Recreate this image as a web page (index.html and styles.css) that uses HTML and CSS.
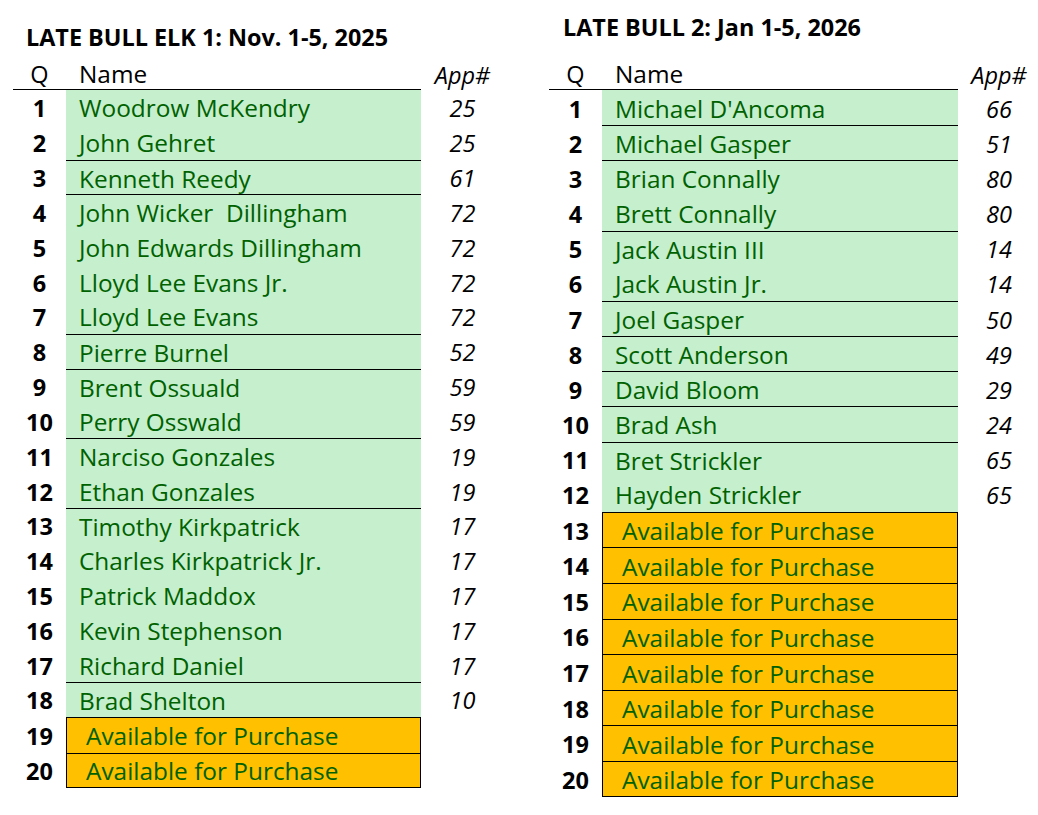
FILE: index.html
```html
<!DOCTYPE html>
<html>
<head>
<meta charset="utf-8">
<link rel="stylesheet" href="styles.css">
</head>
<body>
<div class="sheet">
  <div class="table table-left">
    <div class="title title-left">LATE BULL ELK 1: Nov. 1-5, 2025</div>
    <div class="row head">
      <div class="q">Q</div><div class="name">Name</div><div class="app">App#</div>
    </div>
    <div class="row gl"><div class="q">1</div><div class="name">Woodrow McKendry</div><div class="app">25</div></div>
    <div class="row gl"><div class="q">2</div><div class="name">John Gehret</div><div class="app">25</div></div>
    <div class="row gl"><div class="q">3</div><div class="name top">Kenneth Reedy</div><div class="app">61</div></div>
    <div class="row gl"><div class="q">4</div><div class="name top">John Wicker&nbsp; Dillingham</div><div class="app">72</div></div>
    <div class="row gl"><div class="q">5</div><div class="name">John Edwards Dillingham</div><div class="app">72</div></div>
    <div class="row gl"><div class="q">6</div><div class="name">Lloyd Lee Evans Jr.</div><div class="app">72</div></div>
    <div class="row gl"><div class="q">7</div><div class="name">Lloyd Lee Evans</div><div class="app">72</div></div>
    <div class="row gl"><div class="q">8</div><div class="name top">Pierre Burnel</div><div class="app">52</div></div>
    <div class="row gl"><div class="q">9</div><div class="name top">Brent Ossuald</div><div class="app">59</div></div>
    <div class="row gl"><div class="q">10</div><div class="name">Perry Osswald</div><div class="app">59</div></div>
    <div class="row gl"><div class="q">11</div><div class="name top">Narciso Gonzales</div><div class="app">19</div></div>
    <div class="row gl"><div class="q">12</div><div class="name">Ethan Gonzales</div><div class="app">19</div></div>
    <div class="row gl"><div class="q">13</div><div class="name top">Timothy Kirkpatrick</div><div class="app">17</div></div>
    <div class="row gl"><div class="q">14</div><div class="name">Charles Kirkpatrick Jr.</div><div class="app">17</div></div>
    <div class="row gl"><div class="q">15</div><div class="name">Patrick Maddox</div><div class="app">17</div></div>
    <div class="row gl"><div class="q">16</div><div class="name">Kevin Stephenson</div><div class="app">17</div></div>
    <div class="row gl"><div class="q">17</div><div class="name">Richard Daniel</div><div class="app">17</div></div>
    <div class="row gl"><div class="q">18</div><div class="name top">Brad Shelton</div><div class="app">10</div></div>
    <div class="row ob"><div class="q">19</div><div class="name avail">Available for Purchase</div><div class="app"></div></div>
    <div class="row ob"><div class="q">20</div><div class="name avail last">Available for Purchase</div><div class="app"></div></div>
  </div>

  <div class="table table-right">
    <div class="title">LATE BULL 2: Jan 1-5, 2026</div>
    <div class="row head">
      <div class="q">Q</div><div class="name">Name</div><div class="app">App#</div>
    </div>
    <div class="row gr"><div class="q">1</div><div class="name">Michael D'Ancoma</div><div class="app">66</div></div>
    <div class="row gr"><div class="q">2</div><div class="name top">Michael Gasper</div><div class="app">51</div></div>
    <div class="row gr"><div class="q">3</div><div class="name top">Brian Connally</div><div class="app">80</div></div>
    <div class="row gr"><div class="q">4</div><div class="name">Brett Connally</div><div class="app">80</div></div>
    <div class="row gr"><div class="q">5</div><div class="name top">Jack Austin III</div><div class="app">14</div></div>
    <div class="row gr"><div class="q">6</div><div class="name">Jack Austin Jr.</div><div class="app">14</div></div>
    <div class="row gr"><div class="q">7</div><div class="name top">Joel Gasper</div><div class="app">50</div></div>
    <div class="row gr"><div class="q">8</div><div class="name top">Scott Anderson</div><div class="app">49</div></div>
    <div class="row gr"><div class="q">9</div><div class="name top">David Bloom</div><div class="app">29</div></div>
    <div class="row gr"><div class="q">10</div><div class="name top">Brad Ash</div><div class="app">24</div></div>
    <div class="row gr"><div class="q">11</div><div class="name top">Bret Strickler</div><div class="app">65</div></div>
    <div class="row gr"><div class="q">12</div><div class="name">Hayden Strickler</div><div class="app">65</div></div>
    <div class="row ob"><div class="q">13</div><div class="name avail">Available for Purchase</div><div class="app"></div></div>
    <div class="row ob"><div class="q">14</div><div class="name avail">Available for Purchase</div><div class="app"></div></div>
    <div class="row ob"><div class="q">15</div><div class="name avail">Available for Purchase</div><div class="app"></div></div>
    <div class="row ob"><div class="q">16</div><div class="name avail">Available for Purchase</div><div class="app"></div></div>
    <div class="row ob"><div class="q">17</div><div class="name avail">Available for Purchase</div><div class="app"></div></div>
    <div class="row ob"><div class="q">18</div><div class="name avail">Available for Purchase</div><div class="app"></div></div>
    <div class="row ob"><div class="q">19</div><div class="name avail">Available for Purchase</div><div class="app"></div></div>
    <div class="row ob"><div class="q">20</div><div class="name avail last">Available for Purchase</div><div class="app"></div></div>
  </div>
</div>
</body>
</html>
```

FILE: styles.css
```css
* { box-sizing: border-box; }

html, body {
  margin: 0;
  padding: 0;
  background: #ffffff;
}

body {
  font-family: "Open Sans", "Liberation Sans", sans-serif;
  color: #000000;
  font-size: 23.5px;
}

.sheet {
  display: flex;
  align-items: flex-start;
  padding-left: 13px;
  gap: 45px;
}

.table {
  display: flex;
  flex-direction: column;
}

.table-left { width: 491px; }
.table-right { width: 491px; }

.title {
  height: 57px;
  padding-top: 15px;
  padding-left: 14px;
  font-weight: bold;
  font-size: 23.4px;
  line-height: 24px;
  white-space: nowrap;
}

.title-left {
  padding-top: 25px;
  padding-left: 13px;
}

.row {
  display: grid;
  grid-template-columns: 53px 355px 83px;
  grid-template-rows: 100%;
}

.table-right .row {
  grid-template-columns: 53px 356px 82px;
}

.row > div {
  display: flex;
  align-items: center;
  white-space: nowrap;
  line-height: 28px;
  padding-top: 2px;
  min-height: 0;
}

.head { height: 33px; }
.head .q,
.head .name { border-bottom: 1px solid #000; }
.head .q { font-weight: normal; }
.head .name { color: #000; background: transparent; }

.gl { height: 34.83px; }
.gr { height: 35.17px; }
.ob { height: 35.6px; }

.q {
  justify-content: center;
  font-weight: bold;
}

.name {
  padding-left: 13px;
  background: #c6efce;
  color: #006100;
  font-size: 24.4px;
}

.name.top { border-top: 1px solid #000; }

.name.avail {
  background: #ffc000;
  padding-left: 19px;
  border-top: 1px solid #000;
  border-left: 1px solid #000;
  border-right: 1px solid #000;
}

.name.avail.last { border-bottom: 1px solid #000; }

.app {
  justify-content: center;
  font-style: italic;
}
```
